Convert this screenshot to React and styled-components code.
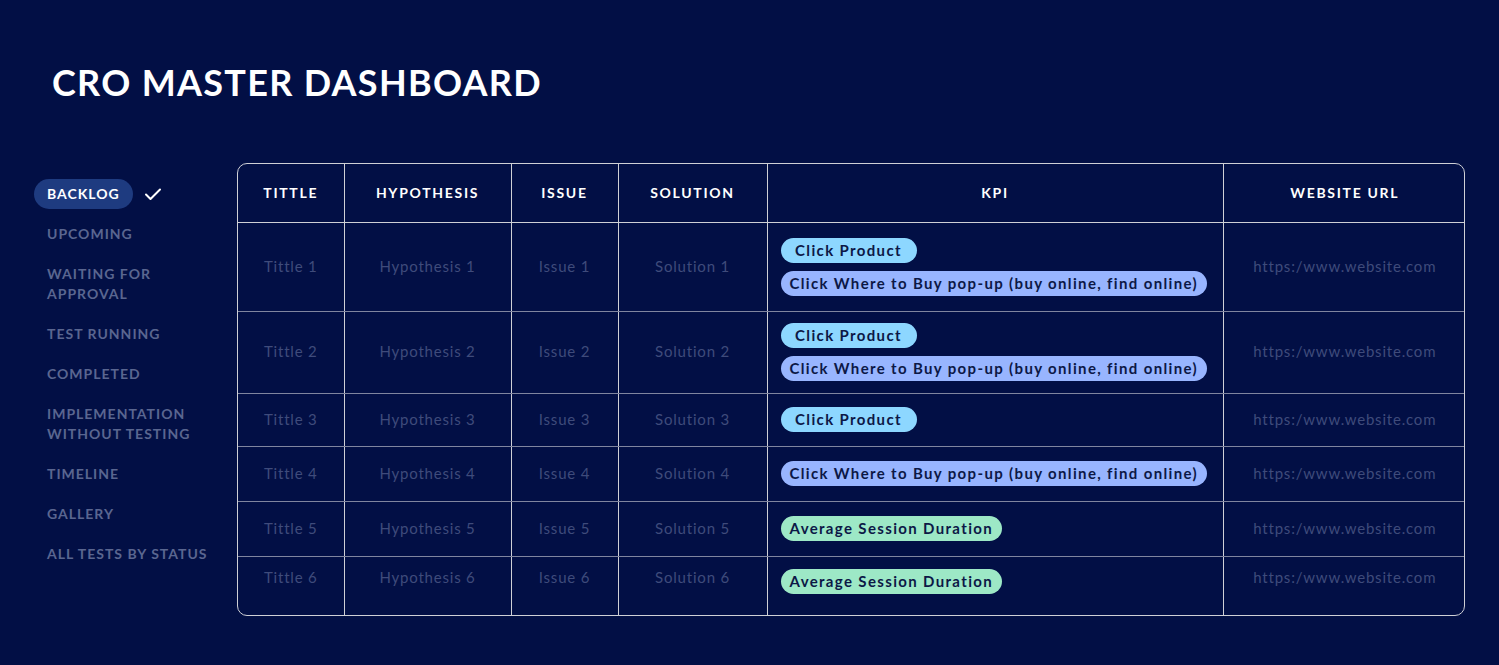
import React from "react";
import styled, { createGlobalStyle } from "styled-components";

const Global = createGlobalStyle`
  html, body { margin: 0; padding: 0; background: #020f45; }
  body { font-family: Lato, "Noto Sans", sans-serif; -webkit-font-smoothing: antialiased; }
  * { box-sizing: border-box; }
`;

const Page = styled.div`
  width: 1499px;
  height: 665px;
  background: #020f45;
  padding-top: 58px;
`;

const Title = styled.h1`
  margin: 0 0 0 52px;
  height: 48px;
  line-height: 48px;
  font-size: 36px;
  font-weight: 700;
  letter-spacing: 1.3px;
  color: #ffffff;
`;

const Main = styled.div`
  display: flex;
  align-items: flex-start;
  margin-top: 57px;
  padding-left: 34px;
`;

const Nav = styled.nav`
  width: 203px;
  flex: none;
  padding-top: 16px;
  display: flex;
  flex-direction: column;
  gap: 20px;
`;

const NavRow = styled.div`
  display: flex;
  align-items: center;
  gap: 10px;
  margin-bottom: -5px;
`;

const NavItem = styled.div`
  font-size: 14px;
  font-weight: 700;
  letter-spacing: 1px;
  line-height: 20px;
  text-transform: uppercase;
  color: ${(p) => (p.$active ? "#ffffff" : "#5a6690")};
  background: ${(p) => (p.$active ? "#1e3b80" : "transparent")};
  border-radius: 15px;
  padding: ${(p) => (p.$active ? "5px 13px" : "0 13px")};
  max-width: 196px;
`;

const Check = () => (
  <svg width="20" height="20" viewBox="0 0 20 20" fill="none">
    <path d="M3 10.5l4.5 4.5L17 5.5" stroke="#ffffff" strokeWidth="2" strokeLinecap="round" strokeLinejoin="round" />
  </svg>
);

const TableWrap = styled.div`
  width: 1228px;
  border: 1px solid #cfd0d6;
  border-radius: 10px;
  overflow: hidden;
`;

const Table = styled.table`
  width: 100%;
  border-collapse: collapse;
  table-layout: fixed;
`;

const Th = styled.th`
  height: 58px;
  font-size: 14px;
  font-weight: 700;
  letter-spacing: 1.7px;
  color: #ffffff;
  text-align: center;
  border-right: 1px solid #cfd0d6;
  border-bottom: 1px solid #cfd0d6;
  &:last-child { border-right: none; }
`;

const Tr = styled.tr`
  height: ${(p) => p.$h}px;
  &:last-child td { border-bottom: none; padding-bottom: 18px; }
  &:last-child td.kpi { padding-bottom: 8px; }
`;

const Td = styled.td`
  font-size: 15px;
  font-weight: 400;
  letter-spacing: 0.8px;
  color: #3f4b7b;
  text-align: ${(p) => (p.$left ? "left" : "center")};
  padding: ${(p) => (p.$left ? "0 13px" : "0 0 2px")};
  vertical-align: middle;
  border-right: 1px solid #cfd0d6;
  border-bottom: 1px solid #80859f;
  &:last-child { border-right: none; }
`;

const Pills = styled.div`
  display: flex;
  flex-direction: column;
  align-items: flex-start;
  gap: 8px;
`;

const Pill = styled.span`
  display: inline-block;
  height: 25px;
  line-height: 25px;
  min-width: 136px;
  padding: 0 9px;
  border-radius: 13px;
  text-align: center;
  font-size: 15px;
  font-weight: 700;
  letter-spacing: 1.35px;
  color: #0c1846;
  background: ${(p) => p.$bg};
`;

const KPI = {
  click: { label: "Click Product", bg: "#8dd7ff" },
  buy: { label: "Click Where to Buy pop-up (buy online, find online)", bg: "#98b5ff" },
  avg: { label: "Average Session Duration", bg: "#9de8c6" },
};

const rows = [
  { n: 1, h: 89, k: ["click", "buy"] },
  { n: 2, h: 82, k: ["click", "buy"] },
  { n: 3, h: 53, k: ["click"] },
  { n: 4, h: 55, k: ["buy"] },
  { n: 5, h: 55, k: ["avg"] },
  { n: 6, h: 59, k: ["avg"] },
];

const navItems = [
  "Upcoming",
  "Waiting for approval",
  "Test running",
  "Completed",
  "Implementation without testing",
  "Timeline",
  "Gallery",
  "All tests by status",
];

const cols = [106, 167, 107, 149, 456, 243];

export default function App() {
  return (
    <Page>
      <Global />
      <Title>CRO MASTER DASHBOARD</Title>
      <Main>
        <Nav>
          <NavRow>
            <NavItem $active>Backlog</NavItem>
            <Check />
          </NavRow>
          {navItems.map((t) => (
            <NavItem key={t}>{t}</NavItem>
          ))}
        </Nav>
        <TableWrap>
          <Table>
            <colgroup>
              {cols.map((w, i) => (
                <col key={i} style={{ width: w }} />
              ))}
            </colgroup>
            <thead>
              <tr>
                <Th>TITTLE</Th>
                <Th>HYPOTHESIS</Th>
                <Th>ISSUE</Th>
                <Th>SOLUTION</Th>
                <Th>KPI</Th>
                <Th>WEBSITE URL</Th>
              </tr>
            </thead>
            <tbody>
              {rows.map((r) => (
                <Tr key={r.n} $h={r.h}>
                  <Td>Tittle {r.n}</Td>
                  <Td>Hypothesis {r.n}</Td>
                  <Td>Issue {r.n}</Td>
                  <Td>Solution {r.n}</Td>
                  <Td $left className="kpi">
                    <Pills>
                      {r.k.map((k) => (
                        <Pill key={k} $bg={KPI[k].bg}>
                          {KPI[k].label}
                        </Pill>
                      ))}
                    </Pills>
                  </Td>
                  <Td>https:/www.website.com</Td>
                </Tr>
              ))}
            </tbody>
          </Table>
        </TableWrap>
      </Main>
    </Page>
  );
}
